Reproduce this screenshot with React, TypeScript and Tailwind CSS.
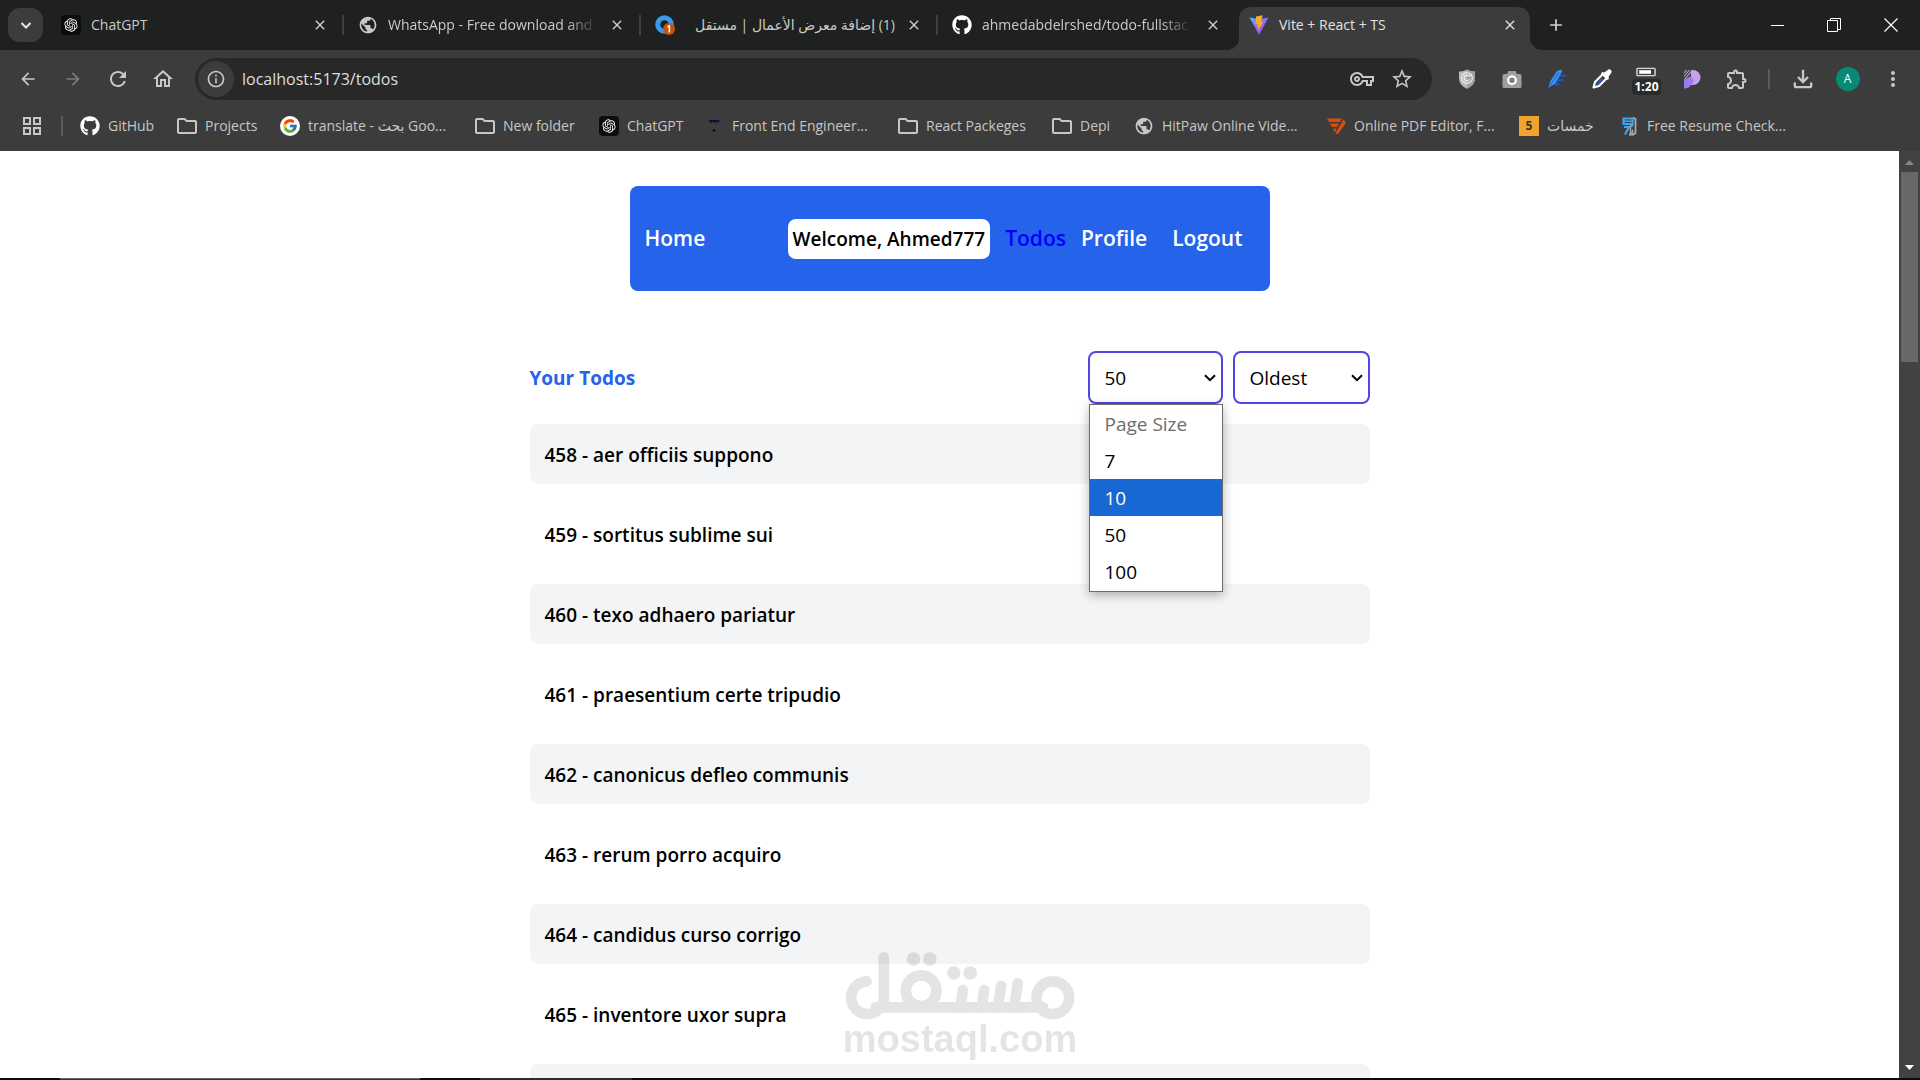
import type { ReactNode } from "react";
import {
  MdArrowBack,
  MdArrowForward,
  MdRefresh,
  MdOutlineHome,
  MdInfoOutline,
  MdStarBorder,
  MdOutlineVpnKey,
  MdOutlineExtension,
  MdOutlineFileDownload,
  MdMoreVert,
  MdOutlineGridView,
  MdOutlineFolder,
  MdPublic,
  MdClose,
  MdAdd,
} from "react-icons/md";
import { FaGithub } from "react-icons/fa";
import { FcGoogle } from "react-icons/fc";
import { RiOpenaiFill } from "react-icons/ri";

/* ---------- favicons ---------- */

const OpenAi = () => (
  <span className="flex size-5 items-center justify-center rounded-sm bg-[#0c0c0c] text-white">
    <RiOpenaiFill className="size-4" />
  </span>
);

const Folder = () => <MdOutlineFolder className="size-6 -mx-0.5 text-[#c7c7c7]" />;
const Globe = () => <MdPublic className="size-5 text-[#c7c7c7]" />;
const Github = () => <FaGithub className="size-5 text-white" />;

const ViteLogo = () => (
  <svg viewBox="0 0 20 20" className="size-5">
    <defs>
      <linearGradient id="vite" x1="0" y1="0" x2="0.6" y2="1">
        <stop offset="0" stopColor="#41c7ff" />
        <stop offset="0.5" stopColor="#8d6bf5" />
        <stop offset="1" stopColor="#a855f7" />
      </linearGradient>
    </defs>
    <path d="M0.5 2.5 L10 4.3 L19.5 2.5 L10 19.8Z" fill="url(#vite)" />
    <path d="M13.8 0.2 L7 1.6 L6.4 9.4 L8.6 9 L8 12.4 L9.6 12 L9 16 L14.4 6.4 L12 6.8Z" fill="#f6a92c" />
  </svg>
);

const MostaqlIcon = () => (
  <svg viewBox="0 0 20 20" className="size-5">
    <circle cx="9.5" cy="9.5" r="6.8" fill="none" stroke="#3b9be8" strokeWidth="5" />
    <circle cx="14" cy="14" r="6" fill="#c8510e" />
    <path d="M12.6 12.2 L14.4 11 V17.4" fill="none" stroke="#fff" strokeWidth="1.5" />
  </svg>
);

const PdfIcon = () => (
  <svg viewBox="0 0 20 20" className="size-5">
    <path d="M1 2.5 H16 L14 6 H3Z M3.5 7.5 H13 L11 11 H6Z M7 12.5 H10.5 L9 16.5Z M17.5 3 L20 7 L11.5 18.5 L9.6 17Z" fill="#d1500f" />
  </svg>
);

const FrontEndIcon = () => (
  <svg viewBox="0 0 20 20" className="size-5">
    <path d="M4.5 4 H15.5 L14.5 7 L13 5.5 L11 7 L9 5.5 L7 7 L5.5 6Z" fill="#0c1030" />
    <circle cx="10" cy="14.5" r="1.6" fill="#0c1030" />
  </svg>
);

const KhamsatIcon = () => (
  <span className="flex size-5 items-center justify-center bg-[#efa52d] text-xs font-bold text-[#40311a]">5</span>
);

const ResumeIcon = () => (
  <svg viewBox="0 0 20 20" className="size-5" fill="none">
    <path d="M14 1.5 L16.5 3 V17 L14.5 18.5 H10" stroke="#a9a9a9" strokeWidth="1.8" />
    <path d="M4.5 2.5 H13.5 V8 H4.5Z M5 11 H10 L6 18.5" stroke="#38a5ee" strokeWidth="2.2" />
    <path d="M5 5.2 H13" stroke="#38a5ee" strokeWidth="1.6" />
    <path d="M14 10 H11.5 V17 H13.5 V13.5" stroke="#a9a9a9" strokeWidth="1.4" />
  </svg>
);

/* ---------- extension icons ---------- */

const ShieldIcon = () => (
  <svg viewBox="0 0 20 20" className="size-5">
    <path d="M10 0.5 C12.5 2 15 2.5 18 2.5 V9 C18 14 15 17.5 10 19.7 C5 17.5 2 14 2 9 V2.5 C5 2.5 7.5 2 10 0.5Z" fill="#b9bcbd" />
    <path d="M10 0.5 C12.5 2 15 2.5 18 2.5 V9 C18 14 15 17.5 10 19.7Z" fill="#9da1a2" />
    <circle cx="10" cy="9" r="5.4" fill="none" stroke="#e3e6e6" strokeWidth="1.4" />
    <path d="M12.2 7.4 A2.8 2.8 0 1 0 12.4 10.4 M12 7.6 L14.5 5" fill="none" stroke="#e9ebeb" strokeWidth="1.3" />
  </svg>
);

const CameraIcon = () => (
  <svg viewBox="0 0 20 20" className="size-5">
    <path d="M0.5 6.5 Q0.5 5 2 5 H5 L6.5 2 H13.5 L15 5 H18 Q19.5 5 19.5 6.5 V17.5 Q19.5 19 18 19 H2 Q0.5 19 0.5 17.5Z" fill="#9f9f9f" />
    <circle cx="10" cy="11.2" r="3.8" fill="#7d7d7d" stroke="#fff" strokeWidth="2.2" />
  </svg>
);

const PenIcon = () => (
  <svg viewBox="0 0 20 20" className="size-5">
    <path d="M13 2 L13.5 5.5 L19.5 5.8 L18 8.2 L12.5 7.8 L12 9.8 L17 10.2 L15.5 12.6 L10.5 12.2 L9.5 14.2 L13.5 14.8 L12 16.8 L6 16Z" fill="#1d55b8" />
    <path d="M1 19.5 L3.5 12 L10 2 L14.5 0.5 L14.8 3 L8 14.5 L3.5 17.5Z" fill="#3d97f2" />
    <path d="M1 19.5 L12 3.5" stroke="#1d55b8" strokeWidth="0.9" />
  </svg>
);

const DropperIcon = () => (
  <svg viewBox="0 0 20 20" className="size-5">
    <path d="M11 5 L3 13 L1.5 18.5 L7 17 L15 9" fill="#3c3c3c" stroke="#fff" strokeWidth="2.2" strokeLinejoin="round" />
    <path d="M9 9.8 L4.6 14.2 L4 16 L6 15.6 L11.5 10Z" fill="#1e5fd0" />
    <path d="M12 3.5 L14.5 2 Q17 -0.8 19 1.2 Q20.8 3.2 18 5.5 L16.5 8 L17 10 L15 11 L9 5 L10 3Z" fill="#fff" />
  </svg>
);

const TimerIcon = () => (
  <span className="mt-1 flex flex-col items-center">
    <svg viewBox="0 0 22 10" className="h-2.5 w-5">
      <rect x="1" y="1" width="20" height="8" rx="1" fill="#3c3c3c" stroke="#d8d8d8" strokeWidth="1.6" />
      <rect x="3.5" y="3" width="13" height="4" fill="#fff" />
    </svg>
    <span className="mt-0.5 rounded-sm bg-[#2a2c2c] px-0.5 text-xs leading-4 font-bold text-white">1:20</span>
  </span>
);

const PurpleIcon = () => (
  <svg viewBox="0 0 20 20" className="size-5">
    <path d="M9 1 H11 A7.5 7.5 0 0 1 11 16 H9Z" fill="#c9a0ea" />
    <path d="M2 11 L9 7 L12 12 L9 16 Q7 19.5 2 19.5Z" fill="#9a7cf0" />
    <path d="M2 1 H10 L2 10.5Z" fill="#3c3c3c" />
    <path d="M2 4 L4.5 1 M2 7.5 L7.5 1 M2.5 10.5 L10.5 1" stroke="#b9b0d8" strokeWidth="1.1" />
  </svg>
);

/* ---------- browser tabs ---------- */

type TabInfo = { icon: ReactNode; title: string; rtl?: boolean; long?: boolean };

const tabs: TabInfo[] = [
  { icon: <OpenAi />, title: "ChatGPT" },
  { icon: <Globe />, title: "WhatsApp - Free download and", long: true },
  { icon: <MostaqlIcon />, title: "(1) إضافة معرض الأعمال | مستقل", rtl: true },
  { icon: <Github />, title: "ahmedabdelrshed/todo-fullstac", long: true },
];

function Tab({ tab, last }: { tab: TabInfo; last: boolean }) {
  return (
    <div
      className={
        "flex h-5 w-[297px] items-center gap-2.5 px-3.5 " + (last ? "" : "border-r-2 border-[#3f4140]")
      }
    >
      {tab.icon}
      <span
        dir={tab.rtl ? "rtl" : "ltr"}
        className={
          "w-[210px] text-sm leading-5 whitespace-nowrap text-[#c9cac9] " +
          (tab.long ? "[mask-image:linear-gradient(to_right,black_85%,transparent)]" : "")
        }
      >
        {tab.title}
      </span>
      <button aria-label={"Close " + tab.title} className="ml-auto text-[#d0d0d0]">
        <MdClose className="size-4" />
      </button>
    </div>
  );
}

function TabStrip() {
  return (
    <div className="flex h-[50px] bg-[#1f2120]">
      <button
        aria-label="Search tabs"
        className="mt-2 ml-2 flex h-[34px] w-[35px] items-center justify-center rounded-xl bg-[#3c3c3c]"
      >
        <svg viewBox="0 0 12 12" className="size-3" fill="none" stroke="#e3e3e3" strokeWidth="2">
          <path d="M1.5 4 L6 8.5 L10.5 4" />
        </svg>
      </button>
      <div className="ml-1 flex items-center">
        {tabs.map((t, i) => (
          <Tab key={t.title} tab={t} last={i === tabs.length - 1} />
        ))}
      </div>
      <div className="ml-1 flex items-end">
        <span className="-ml-3 size-3 bg-[radial-gradient(circle_at_0_0,transparent_12px,#3c3c3c_12px)]" />
        <div className="flex h-[43px] w-[291px] items-center gap-2.5 rounded-t-xl bg-[#3c3c3c] px-2.5 pb-2">
          <ViteLogo />
          <span className="text-sm leading-5 text-[#e3e3e3]">Vite + React + TS</span>
          <button aria-label="Close Vite + React + TS" className="mr-0.5 ml-auto text-[#e3e3e3]">
            <MdClose className="size-4" />
          </button>
        </div>
        <span className="size-3 bg-[radial-gradient(circle_at_100%_0,transparent_12px,#3c3c3c_12px)]" />
      </div>
      <button aria-label="New tab" className="ml-1 text-[#d5d5d5]">
        <MdAdd className="size-5" />
      </button>
      <div className="ml-auto flex items-center text-white">
        <button aria-label="Minimize" className="flex w-14 justify-center">
          <svg viewBox="0 0 14 14" className="size-3.5" stroke="currentColor">
            <path d="M0 7.5 H13" />
          </svg>
        </button>
        <button aria-label="Restore" className="flex w-14 justify-center">
          <svg viewBox="0 0 14 14" className="size-3.5" fill="none" stroke="currentColor">
            <path d="M0.5 2.5 H10.5 V13.5 H0.5Z M3.5 2.5 V0.5 H13.5 V11.5 H10.5" />
          </svg>
        </button>
        <button aria-label="Close window" className="flex w-[58px] justify-center">
          <svg viewBox="0 0 14 14" className="size-3.5" stroke="currentColor" strokeWidth="1.2">
            <path d="M0.5 0.5 L13.5 13.5 M13.5 0.5 L0.5 13.5" />
          </svg>
        </button>
      </div>
    </div>
  );
}

/* ---------- toolbar ---------- */

function NavButton({ label, children }: { label: string; children: ReactNode }) {
  return (
    <button aria-label={label} className="flex w-[45px] items-center justify-center">
      {children}
    </button>
  );
}

function Toolbar() {
  return (
    <div className="flex h-[58px] items-center bg-[#3c3c3c] pl-[5px] text-[#c7c7c7]">
      <NavButton label="Back"><MdArrowBack className="size-5" /></NavButton>
      <NavButton label="Forward"><MdArrowForward className="size-5 text-[#7c7c7c]" /></NavButton>
      <NavButton label="Reload"><MdRefresh className="size-6" /></NavButton>
      <NavButton label="Home"><MdOutlineHome className="size-6" /></NavButton>
      <form className="ml-2.5 flex h-[42px] flex-1 items-center rounded-full bg-[#282828] pr-2.5 pl-[3px]">
        <button type="button" aria-label="Site information" className="flex size-9 items-center justify-center rounded-full bg-[#3c3c3c]">
          <MdInfoOutline className="size-5" />
        </button>
        <input
          aria-label="Address"
          defaultValue="localhost:5173/todos"
          className="ml-2 min-w-0 flex-1 bg-transparent text-base leading-6 text-[#dedede] outline-none"
        />
        <button type="button" aria-label="Passwords" className="flex w-10 justify-center"><MdOutlineVpnKey className="size-6" /></button>
        <button type="button" aria-label="Bookmark this page" className="flex w-10 justify-center"><MdStarBorder className="size-6" /></button>
      </form>
      <div className="ml-3 flex items-center">
        <NavButton label="Shield"><ShieldIcon /></NavButton>
        <NavButton label="Screenshot"><CameraIcon /></NavButton>
        <NavButton label="Writer"><PenIcon /></NavButton>
        <NavButton label="Colour picker"><DropperIcon /></NavButton>
        <NavButton label="Timer"><TimerIcon /></NavButton>
        <NavButton label="Page tools"><PurpleIcon /></NavButton>
        <NavButton label="Extensions"><MdOutlineExtension className="size-6" /></NavButton>
      </div>
      <span className="mr-2.5 ml-[9px] h-5 w-0.5 bg-[#5c5c5c]" />
      <NavButton label="Downloads"><MdOutlineFileDownload className="size-7" /></NavButton>
      <NavButton label="Profile">
        <span className="flex size-6 items-center justify-center rounded-full bg-[#068a74] text-xs text-white">A</span>
      </NavButton>
      <NavButton label="Menu"><MdMoreVert className="size-6" /></NavButton>
      <span className="w-[5px]" />
    </div>
  );
}

/* ---------- bookmarks ---------- */

const bookmarks: { icon: ReactNode; label: string; width: string }[] = [
  { icon: <Github />, label: "GitHub", width: "w-[97px]" },
  { icon: <Folder />, label: "Projects", width: "w-[103px]" },
  { icon: <FcGoogle className="size-5 rounded-full bg-white p-0.5" />, label: "translate - بحث Goo...", width: "w-[195px]" },
  { icon: <Folder />, label: "New folder", width: "w-[124px]" },
  { icon: <OpenAi />, label: "ChatGPT", width: "w-[105px]" },
  { icon: <FrontEndIcon />, label: "Front End Engineer...", width: "w-[194px]" },
  { icon: <Folder />, label: "React Packeges", width: "w-[154px]" },
  { icon: <Folder />, label: "Depi", width: "w-[82px]" },
  { icon: <Globe />, label: "HitPaw Online Vide...", width: "w-[192px]" },
  { icon: <PdfIcon />, label: "Online PDF Editor, F...", width: "w-[193px]" },
  { icon: <KhamsatIcon />, label: "خمسات", width: "w-[100px]" },
  { icon: <ResumeIcon />, label: "Free Resume Check...", width: "w-[200px]" },
];

function BookmarksBar() {
  return (
    <div className="flex h-[43px] items-start bg-[#3c3c3c] pt-2 text-[#c7c7c7]">
      <button aria-label="Apps" className="-mt-0.5 ml-5"><MdOutlineGridView className="size-6" /></button>
      <span className="mx-[17px] h-5 w-0.5 bg-[#5c5c5c]" />
      {bookmarks.map((b) => (
        <a key={b.label} href="#" className={"flex h-5 shrink-0 items-center gap-2 " + b.width}>
          <span className="flex shrink-0 justify-center">{b.icon}</span>
          <span className="text-sm leading-5 whitespace-nowrap">{b.label}</span>
        </a>
      ))}
    </div>
  );
}

/* ---------- page ---------- */

function SiteNav() {
  return (
    <nav className="mx-auto mt-[35px] flex h-[105px] w-[640px] items-center rounded-lg bg-[#2563eb] px-[15px] text-[21px] font-semibold text-white">
      <a href="#home">Home</a>
      <div className="ml-auto flex items-center gap-[15px] pr-3">
        <span className="flex h-10 items-center rounded-lg bg-white px-[5px] pt-0.5 text-[19px] text-black">
          Welcome, Ahmed777
        </span>
        <a href="#todos" className="text-[#0000ff]">Todos</a>
        <a href="#profile">Profile</a>
        <button className="ml-2.5">Logout</button>
      </div>
    </nav>
  );
}

function Chevron() {
  return (
    <svg viewBox="0 0 12 8" className="pointer-events-none absolute top-[23px] right-[7px] h-2 w-3" fill="none" stroke="#000" strokeWidth="2">
      <path d="M1 1.2 L6 6.2 L11 1.2" />
    </svg>
  );
}

const selectClass =
  "h-[53px] w-full appearance-none rounded-lg border-2 border-[#4f46e5] bg-white px-[15px] pt-0.5 text-[19px] text-black outline-none";

function PageSizeSelect() {
  const options = ["Page Size", "7", "10", "50", "100"];
  return (
    <div className="relative w-[135px]">
      <select aria-label="Page Size" defaultValue="50" className={selectClass}>
        {options.map((o) => (
          <option key={o} disabled={o === "Page Size"}>{o}</option>
        ))}
      </select>
      <Chevron />
      <ul
        role="listbox"
        aria-label="Page Size"
        className="absolute top-full right-0 left-px z-10 border border-[#6b6b6b] bg-white pb-px text-[19px] shadow-[0_3px_10px_rgba(0,0,0,0.3)]"
      >
        {options.map((o) => (
          <li
            key={o}
            role="option"
            aria-selected={o === "10"}
            className={
              "px-[15px] pt-0.5 leading-[35px] " +
              (o === "10" ? "bg-[#1967d2] text-white" : o === "Page Size" ? "text-[#6d6d6d]" : "text-black")
            }
          >
            {o}
          </li>
        ))}
      </ul>
    </div>
  );
}

const todos = [
  "458 - aer officiis suppono",
  "459 - sortitus sublime sui",
  "460 - texo adhaero pariatur",
  "461 - praesentium certe tripudio",
  "462 - canonicus defleo communis",
  "463 - rerum porro acquiro",
  "464 - candidus curso corrigo",
  "465 - inventore uxor supra",
  "",
];

function Todos() {
  return (
    <section className="mx-auto mt-[60px] w-[840px]">
      <div className="flex items-center gap-2.5">
        <h2 className="mr-auto pt-0.5 text-[19px] font-bold text-[#2563eb]">Your Todos</h2>
        <PageSizeSelect />
        <div className="relative w-[137px]">
          <select aria-label="Sort order" defaultValue="Oldest" className={selectClass}>
            <option>Oldest</option>
            <option>Latest</option>
          </select>
          <Chevron />
        </div>
      </div>
      <ul className="mt-5 flex flex-col gap-5">
        {todos.map((t) => (
          <li key={t} className="flex h-[60px] items-center rounded-lg px-[15px] pt-0.5 text-[19px] font-semibold text-black odd:bg-[#f3f4f6]">
            {t}
          </li>
        ))}
      </ul>
    </section>
  );
}

function Watermark() {
  return (
    <div className="pointer-events-none absolute bottom-5 left-1/2 flex -translate-x-1/2 flex-col items-center text-black opacity-10">
      <svg viewBox="135 156 690 204" className="h-[68px] w-[230px]" fill="none" stroke="currentColor" strokeWidth="32" strokeLinecap="round">
        <path d="M200 244 A49 49 0 1 0 252 293 V172" />
        <path d="M228 322 H730" />
        <circle cx="364" cy="272" r="46" />
        <circle cx="759" cy="293" r="49" />
        <path d="M489 270 L482 322 M553 270 L546 322 M604 258 L594 322 M654 250 L643 322" />
        <g fill="currentColor" stroke="none">
          <circle cx="341" cy="177" r="20.5" />
          <circle cx="390" cy="177" r="20.5" />
          <circle cx="462" cy="219" r="20.5" />
          <circle cx="511" cy="219" r="20.5" />
        </g>
      </svg>
      <span className="font-['Liberation_Sans',sans-serif] text-[38px] leading-[38px] font-bold">mostaql.com</span>
    </div>
  );
}

function Scrollbar() {
  return (
    <div className="flex w-[21px] flex-col items-center bg-[#424242]">
      <svg viewBox="0 0 9 5" className="mt-[9px] h-[5px] w-[9px]">
        <path d="M0 5 L4.5 0 L9 5Z" fill="#868686" />
      </svg>
      <span className="mt-[7px] h-[190px] w-[17px] bg-[#686868]" />
      <svg viewBox="0 0 9 5" className="mt-auto mb-2 h-[5px] w-[9px]">
        <path d="M0 0 L4.5 5 L9 0Z" fill="#ffffff" />
      </svg>
    </div>
  );
}

export default function App() {
  return (
    <div className="flex h-screen flex-col overflow-hidden bg-white font-['Open_Sans','DejaVu_Sans',sans-serif]">
      <header className="shrink-0">
        <TabStrip />
        <Toolbar />
        <BookmarksBar />
      </header>
      <div className="relative flex min-h-0 flex-1">
        <main className="min-w-0 flex-1 overflow-hidden">
          <SiteNav />
          <Todos />
        </main>
        <Scrollbar />
        <Watermark />
      </div>
      <footer className="flex h-0.5 shrink-0 bg-[#0c0c0c]">
        <span className="ml-[60px] w-[360px] border-t border-[#6a6a6a] bg-[#333333]" />
        <span className="ml-[60px] w-[152px] bg-[#2c2c2c]" />
      </footer>
    </div>
  );
}
